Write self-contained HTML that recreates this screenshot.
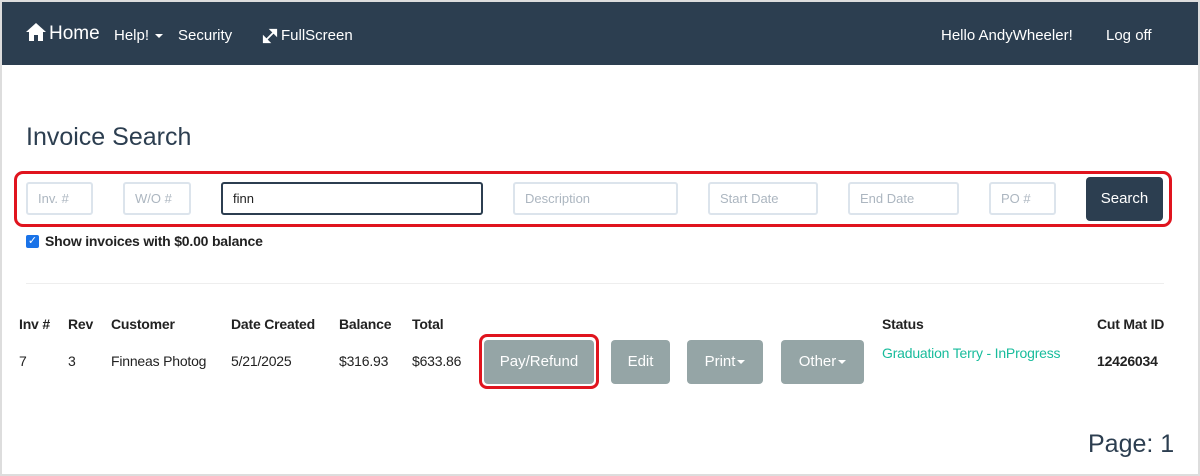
<!DOCTYPE html>
<html><head><style>
*{box-sizing:border-box;margin:0;padding:0}
body{width:1200px;height:476px;background:#ddd;font-family:"Liberation Sans",sans-serif;position:relative;overflow:hidden}
#pg{position:absolute;left:2px;top:2px;width:1196px;height:472px;background:#fff}
.nav{position:absolute;left:2px;top:2px;width:1196px;height:63px;background:#2c3e50;color:#fff;font-size:15px}
.nav span{position:absolute;top:25px}
.a{position:absolute}
.in{position:absolute;top:182px;height:33px;border:2px solid #dce4ec;border-radius:3px;color:#acb6c0;font-size:13px;padding:7px 10px}
.btn{position:absolute;top:340px;height:44px;background:#95a5a6;color:#fff;border-radius:4px;font-size:15px;text-align:center;line-height:44px}
.car{display:inline-block;border-left:4px solid transparent;border-right:4px solid transparent;border-top:4px solid #fff;vertical-align:middle;margin-left:2px}
.h{position:absolute;top:316px;font-size:14px;font-weight:bold;color:#222;letter-spacing:-0.2px}
.d{position:absolute;top:353px;font-size:14px;color:#222;letter-spacing:-0.2px}
</style></head><body>
<div id="pg"></div>
<div class="nav">
<svg class="a" style="left:23px;top:20px" width="22" height="20" viewBox="0 0 22 20"><path d="M11 1L1 10h3v9h5v-6h4v6h5v-9h3z" fill="#fff"/></svg>
<span style="left:47px;top:21px;font-size:19px">Home</span>
<span style="left:112px">Help! <i class="car"></i></span>
<span style="left:176px">Security</span>
<svg class="a" style="left:260px;top:26px" width="16" height="16" viewBox="0 0 18 18"><path d="M3 15L15 3M2 16v-6l6 6zM16 2v6l-6-6z" stroke="#fff" stroke-width="2" fill="#fff"/></svg>
<span style="left:279px">FullScreen</span>
<span style="left:939px">Hello AndyWheeler!</span>
<span style="left:1104px">Log off</span>
</div>
<div class="a" style="left:26px;top:123px;font-size:25px;color:#2c3e50">Invoice Search</div>
<div class="a" style="left:14px;top:171px;width:1158px;height:56px;border:3px solid #e0141e;border-radius:9px"></div>
<div class="in" style="left:26px;width:67px">Inv. #</div>
<div class="in" style="left:123px;width:68px">W/O #</div>
<div class="in" style="left:221px;width:262px;border-color:#2c3e50;color:#222">finn</div>
<div class="in" style="left:513px;width:165px">Description</div>
<div class="in" style="left:708px;width:110px">Start Date</div>
<div class="in" style="left:848px;width:111px">End Date</div>
<div class="in" style="left:989px;width:67px">PO #</div>
<div class="a" style="left:1086px;top:177px;width:77px;height:44px;background:#2c3e50;color:#fff;border-radius:4px;font-size:15px;text-align:center;line-height:44px">Search</div>
<div class="a" style="left:26px;top:235px;width:13px;height:13px;background:#1a73e8;border-radius:2px;color:#fff;font-size:11px;text-align:center;line-height:13px">✓</div>
<div class="a" style="left:45px;top:233px;font-size:14px;font-weight:bold;color:#222;letter-spacing:-0.2px">Show invoices with $0.00 balance</div>
<div class="a" style="left:26px;top:283px;width:1138px;height:1px;background:#eee"></div>
<div class="h" style="left:19px">Inv #</div><div class="h" style="left:68px">Rev</div><div class="h" style="left:111px">Customer</div><div class="h" style="left:231px">Date Created</div><div class="h" style="left:339px">Balance</div><div class="h" style="left:412px">Total</div><div class="h" style="left:882px">Status</div><div class="h" style="left:1097px">Cut Mat ID</div>
<div class="d" style="left:19px">7</div><div class="d" style="left:68px">3</div><div class="d" style="left:111px">Finneas Photog</div><div class="d" style="left:231px">5/21/2025</div><div class="d" style="left:339px">$316.93</div><div class="d" style="left:412px">$633.86</div>
<div class="d" style="left:882px;top:345px;color:#18bc9c">Graduation Terry - InProgress</div>
<div class="d" style="left:1097px;font-weight:bold">12426034</div>
<div class="a" style="left:479px;top:334px;width:120px;height:55px;border:3px solid #e0141e;border-radius:8px"></div>
<div class="btn" style="left:484px;width:110px">Pay/Refund</div>
<div class="btn" style="left:611px;width:59px">Edit</div>
<div class="btn" style="left:687px;width:76px">Print<i class="car"></i></div>
<div class="btn" style="left:781px;width:83px">Other<i class="car"></i></div>
<div class="a" style="left:1088px;top:430px;font-size:25px;color:#2c3e50">Page: 1</div>
</body></html>
